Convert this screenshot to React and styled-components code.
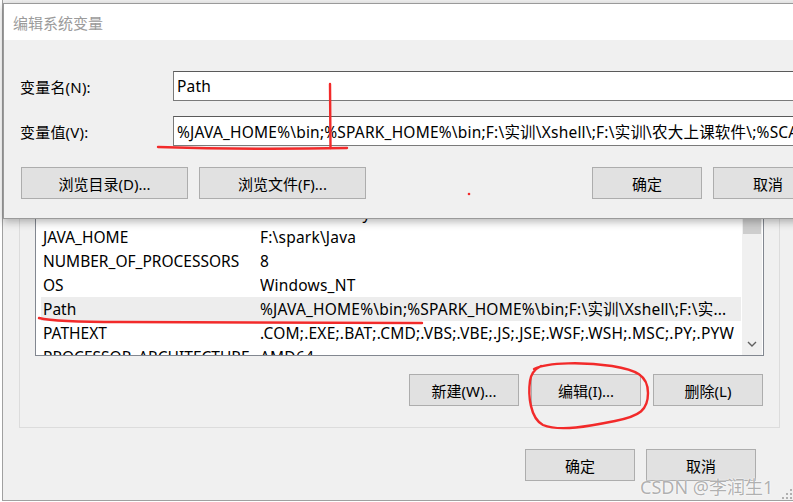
import React from "react";
import styled, { createGlobalStyle } from "styled-components";

const Global = createGlobalStyle`
  html, body { margin: 0; padding: 0; overflow: hidden; background: #fff; }
  * { box-sizing: border-box; }
`;

const FONT = `"Noto Sans", "Noto Sans CJK SC", sans-serif`;

const Desktop = styled.div`
  position: relative;
  width: 793px;
  height: 502px;
  overflow: hidden;
  background: #fff;
  font-family: ${FONT};
  color: #000;
`;

/* ---------- background window (环境变量) ---------- */
const BackWindow = styled.div`
  position: absolute;
  left: 2px;
  top: -100px;
  width: 796px;
  height: 601px;
  background: #f0f0f0;
  border: 1px solid #a0a0a0;
  display: flex;
  flex-direction: column;
  justify-content: flex-end;
  padding: 0 41px 19px 16px;
`;

const GroupBox = styled.div`
  width: 761px;
  border: 1px solid #dcdcdc;
  padding: 0 15px 21px 15px;
  display: flex;
  flex-direction: column;
`;

const ListBox = styled.div`
  height: 156px;
  border: 1px solid #828790;
  background: #fff;
  display: flex;
  padding-right: 1px;
  overflow: hidden;
`;

const Rows = styled.div`
  flex: 1;
  display: flex;
  flex-direction: column;
  overflow: hidden;
  padding-left: 5px;
  padding-right: 1px;
`;

const Row = styled.div`
  flex: none;
  height: 24px;
  display: flex;
  align-items: center;
  padding-left: 2px;
  background: ${(p) => (p.$selected ? "#ededed" : "transparent")};
  font-size: 15.5px;
  line-height: 24px;
  white-space: nowrap;
`;

const NameCell = styled.span`
  width: 217px;
  flex: none;
`;

const ValueCell = styled.span`
  flex: 1;
  overflow: hidden;
  letter-spacing: 0.2px;
`;

const ScrollBar = styled.div`
  width: 20px;
  flex: none;
  background: #f0f0f0;
  display: flex;
  flex-direction: column;
  justify-content: space-between;
`;

const Thumb = styled.div`
  height: 33px;
  margin: 0 1px;
  background: #cdcdcd;
`;

const ArrowBtn = styled.div`
  height: 20px;
  display: flex;
  align-items: center;
  justify-content: center;
  padding-bottom: 3px;
`;

const ButtonRow = styled.div`
  display: flex;
  justify-content: flex-end;
  gap: ${(p) => p.$gap || 12}px;
  margin-top: ${(p) => p.$mt || 0}px;
  padding-right: ${(p) => p.$pr || 0}px;
`;

const Button = styled.div`
  width: ${(p) => p.$w || 110}px;
  height: 32px;
  flex: none;
  background: #e1e1e1;
  border: 1px solid #adadad;
  display: flex;
  align-items: center;
  justify-content: center;
  font-size: 15px;
  white-space: nowrap;
`;

/* ---------- dialog (编辑系统变量) ---------- */
const Dialog = styled.div`
  position: absolute;
  left: 3px;
  top: 3px;
  width: 840px;
  height: 216px;
  background: #f0f0f0;
  border: 1px solid #9a9a9a;
  box-shadow: 0 3px 8px rgba(0, 0, 0, 0.28);
  display: flex;
  flex-direction: column;
`;

const TitleBar = styled.div`
  height: 36px;
  background: #fff;
  display: flex;
  align-items: center;
  padding-left: 9px;
  font-size: 15px;
  color: #9b9b9b;
`;

const DialogBody = styled.div`
  flex: 1;
  padding: 31px 19px 0 16px;
  display: flex;
  flex-direction: column;
`;

const FieldRow = styled.div`
  display: flex;
  align-items: center;
  margin-bottom: ${(p) => p.$mb || 0}px;
`;

const Label = styled.div`
  width: 153px;
  flex: none;
  font-size: 15px;
  letter-spacing: 0.2px;
`;

const TextBox = styled.div`
  flex: 1;
  height: 30px;
  background: #fff;
  border: 1px solid #7a7a7a;
  border-top-color: #5a5a5a;
  display: flex;
  align-items: center;
  padding-left: 3px;
  font-size: 15.5px;
  letter-spacing: 0.2px;
  white-space: nowrap;
  overflow: hidden;
`;

const DialogButtons = styled.div`
  display: flex;
  align-items: center;
  margin-top: 21px;
  padding-left: 1px;
  gap: 11px;
`;

const Spacer = styled.div`
  flex: 1;
`;

/* ---------- overlays ---------- */
const Annotations = styled.svg`
  position: absolute;
  left: 0;
  top: 0;
  pointer-events: none;
`;

const Watermark = styled.div`
  position: absolute;
  left: 640px;
  top: 473px;
  font-family: "Noto Sans", "Noto Sans CJK SC", sans-serif;
  font-size: 18px;
  color: rgba(150, 150, 150, 0.75);
  text-shadow: 0 0 2px #fff, 0 0 1px #fff;
  white-space: nowrap;
`;

const Grip = styled.svg`
  position: absolute;
  right: 0;
  bottom: 2px;
`;

const PATH_VALUE = String.raw`%JAVA_HOME%\bin;%SPARK_HOME%\bin;F:\实训\Xshell\;F:\实训\农大上课软件\;%SCALA_HOME%\bin;%HADOOP_HOME%\bin`;
const PATH_SHORT = String.raw`%JAVA_HOME%\bin;%SPARK_HOME%\bin;F:\实训\Xshell\;F:\实...`;

const rows = [
  { name: "DriverData", value: String.raw`C:\Windows\System32\Drivers\DriverData` },
  { name: "JAVA_HOME", value: String.raw`F:\spark\Java` },
  { name: "NUMBER_OF_PROCESSORS", value: "8" },
  { name: "OS", value: "Windows_NT" },
  { name: "Path", value: PATH_SHORT, selected: true },
  { name: "PATHEXT", value: ".COM;.EXE;.BAT;.CMD;.VBS;.VBE;.JS;.JSE;.WSF;.WSH;.MSC;.PY;.PYW" },
  { name: "PROCESSOR_ARCHITECTURE", value: "AMD64" },
];

export default function App() {
  return (
    <Desktop>
      <Global />
      <BackWindow>
        <GroupBox>
          <ListBox>
            <Rows>
              {rows.map((r) => (
                <Row key={r.name} $selected={r.selected}>
                  <NameCell>{r.name}</NameCell>
                  <ValueCell>{r.value}</ValueCell>
                </Row>
              ))}
            </Rows>
            <ScrollBar>
              <Thumb />
              <ArrowBtn>
                <svg width="10" height="6" viewBox="0 0 10 6">
                  <path d="M1 1 L5 5 L9 1" fill="none" stroke="#606060" strokeWidth="1.4" />
                </svg>
              </ArrowBtn>
            </ScrollBar>
          </ListBox>
          <ButtonRow $mt={18} $pr={1}>
            <Button>新建(W)...</Button>
            <Button>编辑(I)...</Button>
            <Button>删除(L)</Button>
          </ButtonRow>
        </GroupBox>
        <ButtonRow $mt={21} $gap={11}>
          <Button>确定</Button>
          <Button>取消</Button>
        </ButtonRow>
      </BackWindow>

      <Dialog>
        <TitleBar>编辑系统变量</TitleBar>
        <DialogBody>
          <FieldRow $mb={15}>
            <Label>变量名(N):</Label>
            <TextBox>Path</TextBox>
          </FieldRow>
          <FieldRow>
            <Label>变量值(V):</Label>
            <TextBox>{PATH_VALUE}</TextBox>
          </FieldRow>
          <DialogButtons>
            <Button $w={167}>浏览目录(D)...</Button>
            <Button $w={167}>浏览文件(F)...</Button>
            <Spacer />
            <Button>确定</Button>
            <Button>取消</Button>
          </DialogButtons>
        </DialogBody>
      </Dialog>

      <Annotations width="793" height="502" viewBox="0 0 793 502">
        <g fill="none" stroke="#f22a2a" strokeWidth="2.4" strokeLinecap="round" strokeLinejoin="round">
          <path d="M330 84 L330.5 148" />
          <path d="M158 147 Q250 150 347 148" />
          <path d="M39 318 Q55 322 120 322 L422 323" />
          <path d="M534 369 C548 362 585 362 612 366 C636 370 648 375 648 393 C648 410 640 416 615 421 C590 426 560 432 543 425 C530 418 528 395 530 381 C531 373 535 369 541 366" />
        </g>
        <circle cx="469" cy="194" r="1.3" fill="#f22a2a" />
      </Annotations>

      <Watermark>CSDN @李润生1</Watermark>
      <Grip width="11" height="11" viewBox="0 0 11 11">
        <g fill="#b0b0b0">
          <rect x="8" y="0" width="2" height="2" />
          <rect x="4" y="4" width="2" height="2" />
          <rect x="8" y="4" width="2" height="2" />
          <rect x="0" y="8" width="2" height="2" />
          <rect x="4" y="8" width="2" height="2" />
          <rect x="8" y="8" width="2" height="2" />
        </g>
      </Grip>
    </Desktop>
  );
}
